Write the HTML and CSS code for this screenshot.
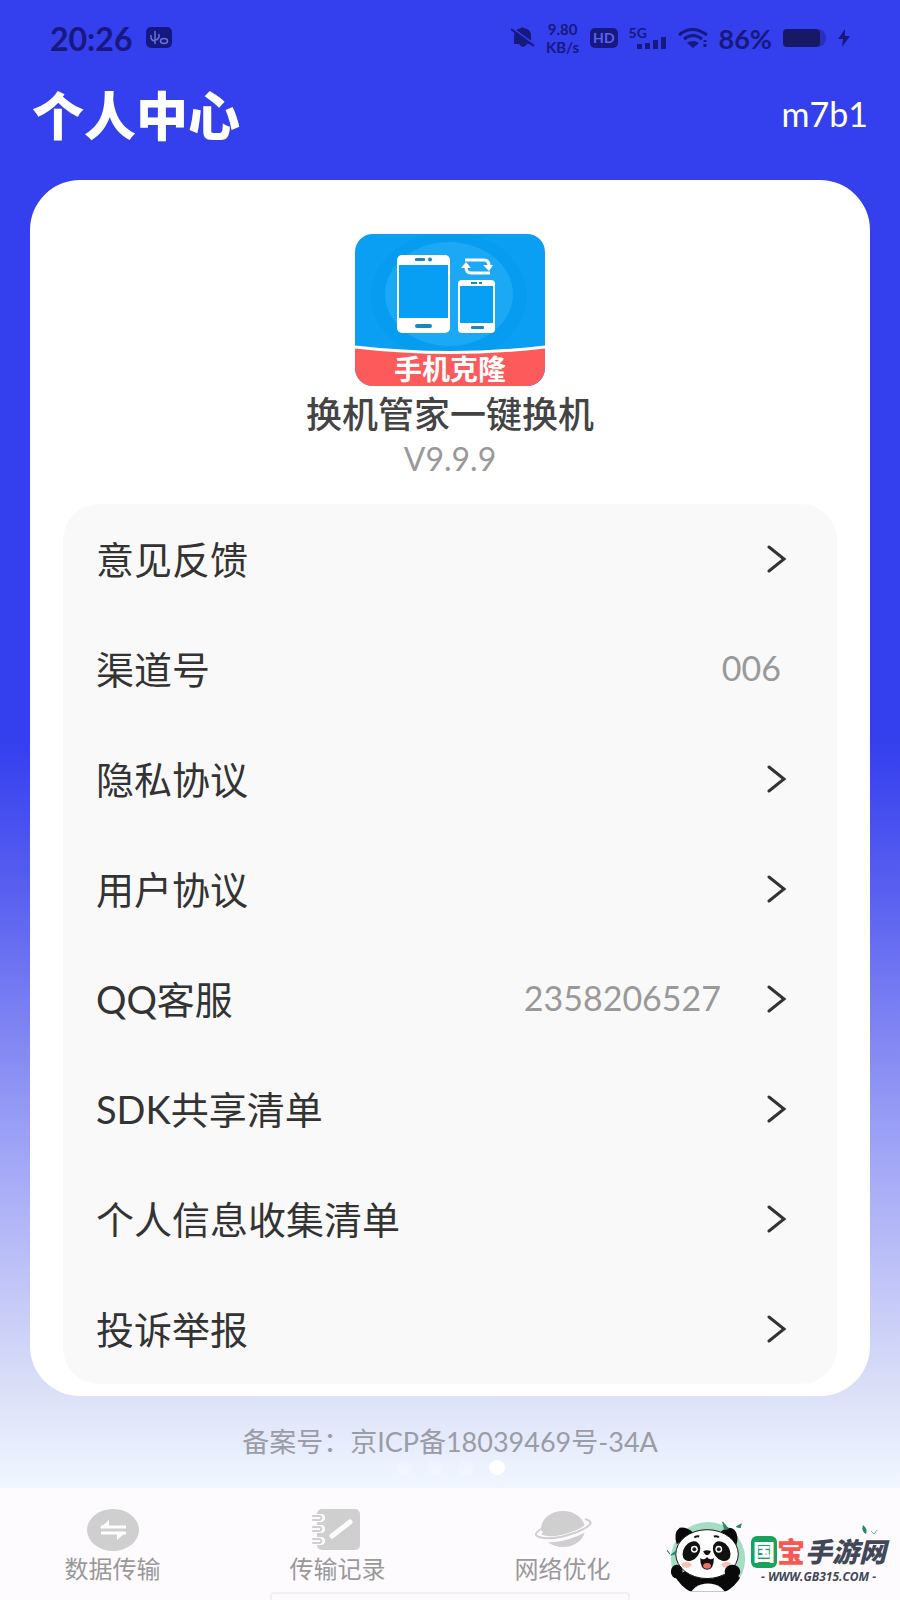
FILE: index.html
```html
<!DOCTYPE html>
<html lang="zh-CN">
<head>
    <meta charset="UTF-8">
    <meta name="viewport" content="width=device-width, initial-scale=1.0">
    <title>个人中心</title>
    <link rel="stylesheet" href="styles.css">
</head>
<body>
    <div class="status-bar">
        <span class="clock">20:26</span>
        <svg class="app-badge" width="26" height="22" viewBox="0 0 26 22">
            <rect width="26" height="21" rx="5" fill="#15187f"/>
            <path d="M5 8v3q1 3 4 3M9 4v13M13 7v3q-1 3-4 3" fill="none" stroke="#6a70d8" stroke-width="1.5"/>
            <ellipse cx="18" cy="14" rx="3.5" ry="2.5" fill="none" stroke="#6a70d8" stroke-width="1.5"/>
        </svg>
        <div class="status-icons">
            <svg width="24" height="22" viewBox="0 0 24 22">
                <path d="M3 17V9q0-7 7-8 1-1.500 3 0 7 1 7 8v8zM8 17h8q-4 6-8 0z" fill="#17197f"/>
                <path d="M1 1l23 17" stroke="#343fee" stroke-width="2"/>
                <path d="M0 2l23 17" stroke="#17197f" stroke-width="2"/>
            </svg>
            <span class="speed"><span>9.80</span><span>KB/s</span></span>
            <span class="hd">HD</span>
            <div class="signal">
                <span class="net">5G</span>
                <svg width="30" height="12" viewBox="0 0 30 12">
                    <path d="M0 7h5v5H0zM8 6h5v6H8zM16 3h5v9h-5zM24 0h5v12h-5z" fill="#17197f"/>
                </svg>
            </div>
            <svg width="30" height="20" viewBox="0 0 30 20">
                <g fill="none" stroke="#17197f" stroke-width="3">
                    <path d="M1 7q13-11 28 0M6 11q9-7 18 0"/>
                </g>
                <path d="M9 15q6-4 12 0l-6 5z" fill="#17197f"/>
                <path d="M27 12v2M27 16v3" stroke="#17197f" stroke-width="3"/>
            </svg>
            <span class="percent">86%</span>
            <svg width="44" height="18" viewBox="0 0 44 18">
                <path d="M36 0q7 2 7 9t-7 9z" fill="#2b30b8"/>
                <rect width="37" height="18" rx="4" fill="#171866"/>
            </svg>
            <svg width="12" height="18" viewBox="0 0 12 18">
                <path d="M7 0L0 10h5l-1 8 8-11H7z" fill="#17197f"/>
            </svg>
        </div>
    </div>

    <div class="header">
        <h1>个人中心</h1>
        <span class="user">m7b1</span>
    </div>

    <div class="card">
        <svg class="logo" viewBox="0 0 190 152">
            <defs>
                <clipPath id="logo-clip"><rect width="190" height="152" rx="18"/></clipPath>
            </defs>
            <g clip-path="url(#logo-clip)">
                <rect width="190" height="152" fill="#0a9ff3"/>
                <ellipse cx="94" cy="62" rx="78" ry="64" fill="#069df0"/>
                <ellipse cx="94" cy="60" rx="64" ry="52" fill="#1ba8f4"/>
                <path d="M0 113q95 11 190 0v39H0z" fill="#fd5a5c"/>
                <path d="M0 113q95 11 190 0" fill="none" stroke="#fff" stroke-width="3"/>
            </g>
            <rect x="42" y="21" width="53" height="78" rx="5" fill="#fff"/>
            <rect x="44" y="31" width="49" height="53" fill="#069ff3"/>
            <rect x="60" y="24" width="10" height="3" rx="1" fill="#1587c4"/>
            <circle cx="75" cy="25.500" r="2" fill="#1587c4"/>
            <rect x="60" y="90" width="17" height="4" rx="2" fill="#1587c4"/>
            <rect x="103" y="46" width="37" height="53" rx="4" fill="#fff"/>
            <rect x="105" y="52" width="33" height="37" fill="#069ff3"/>
            <path d="M116 49h6M124 49h3" stroke="#1587c4" stroke-width="2"/>
            <rect x="116" y="92" width="13" height="3" rx="1" fill="#1587c4"/>
            <path d="M110 26h19q5 0 5 6M135 39h-19q-5 0-5-6" fill="none" stroke="#fff" stroke-width="3"/>
            <path d="M128 31h10l-4 6zM106 34h10l-5-6z" fill="#fff"/>
            <text x="95" y="146" class="logo-text">手机克隆</text>
        </svg>
        <h2>换机管家一键换机</h2>
        <p class="version">V9.9.9</p>

        <ul class="menu">
            <li><a href="#feedback">意见反馈 <svg class="arrow" viewBox="0 0 20 28"><path d="M2 2l15 12L2 26"/></svg></a></li>
            <li><div class="row">渠道号 <span class="value">006</span></div></li>
            <li><a href="#privacy">隐私协议 <svg class="arrow" viewBox="0 0 20 28"><path d="M2 2l15 12L2 26"/></svg></a></li>
            <li><a href="#terms">用户协议 <svg class="arrow" viewBox="0 0 20 28"><path d="M2 2l15 12L2 26"/></svg></a></li>
            <li><a href="#qq">QQ客服 <span class="value">2358206527</span><svg class="arrow" viewBox="0 0 20 28"><path d="M2 2l15 12L2 26"/></svg></a></li>
            <li><a href="#sdk">SDK共享清单 <svg class="arrow" viewBox="0 0 20 28"><path d="M2 2l15 12L2 26"/></svg></a></li>
            <li><a href="#collect">个人信息收集清单 <svg class="arrow" viewBox="0 0 20 28"><path d="M2 2l15 12L2 26"/></svg></a></li>
            <li><a href="#report">投诉举报 <svg class="arrow" viewBox="0 0 20 28"><path d="M2 2l15 12L2 26"/></svg></a></li>
        </ul>
    </div>

    <p class="record">备案号：京ICP备18039469号-34A</p>
    <div class="dots"><i></i><i></i><i></i><i class="on"></i></div>

    <nav class="tabs">
        <a href="#transfer">
            <svg width="54" height="44" viewBox="0 0 54 44">
                <ellipse cx="27" cy="22" rx="26" ry="21" fill="#cfcfcf"/>
                <path d="M15 19h25M15 25h25" stroke="#fff" stroke-width="3"/>
                <path d="M14 20l9-8v8zM40 24l-9 8v-8z" fill="#fff"/>
            </svg>
            数据传输
        </a>
        <a href="#history">
            <svg width="54" height="44" viewBox="0 0 54 44">
                <rect x="6" y="1" width="43" height="41" rx="5" fill="#cfcfcf"/>
                <g fill="none" stroke-linecap="round">
                    <path d="M5 10h5M5 21h5M5 33h5" stroke="#fdfbfe" stroke-width="8"/>
                    <path d="M2 8h7q3 2 0 4H2M2 19h7q3 2 0 4H2M2 31h7q3 2 0 4H2" stroke="#cfcfcf" stroke-width="2"/>
                    <path d="M21 28l18-14" stroke="#fff" stroke-width="5"/>
                </g>
            </svg>
            传输记录
        </a>
        <a href="#network">
            <svg width="60" height="44" viewBox="0 0 60 44">
                <ellipse cx="30" cy="21" rx="22" ry="18" fill="#cfcfcf"/>
                <path d="M8 22q-7 6 0 8 14 4 36-5 20-9 8-13" fill="none" stroke="#fdfbfe" stroke-width="6"/>
                <path d="M8 21q-9 6-2 8 14 4 38-5 22-9 8-13" fill="none" stroke="#cfcfcf" stroke-width="2"/>
            </svg>
            网络优化
        </a>
        <a class="brand" href="#site">
            <svg class="panda" viewBox="0 0 86 78">
                <defs>
                    <clipPath id="panda-clip"><path d="M0 0h86v72H0z"/></clipPath>
                    <clipPath id="body-clip"><circle cx="42" cy="39" r="38"/></clipPath>
                </defs>
                <g clip-path="url(#panda-clip)">
                    <circle cx="42" cy="39" r="38" fill="#a4dcc4"/>
                    <g clip-path="url(#body-clip)">
                        <ellipse cx="42" cy="71" rx="38" ry="25" fill="#090909"/>
                        <ellipse cx="42" cy="77" rx="18" ry="13" fill="#fff"/>
                    </g>
                </g>
                <path d="M10 24q-4-12 3-17 7-1 14 5zM55 11q8-7 14-2 5 6 2 16z" fill="#090909"/>
                <ellipse cx="41" cy="34" rx="32" ry="25" fill="#fff" stroke="#111"/>
                <ellipse cx="25" cy="31" rx="8" ry="11" transform="rotate(35 25 31)" fill="#111"/>
                <ellipse cx="56" cy="31" rx="8" ry="11" transform="rotate(-35 56 31)" fill="#111"/>
                <circle cx="28" cy="29" r="3.500" fill="#fff"/>
                <circle cx="53" cy="29" r="3.500" fill="#fff"/>
                <circle cx="28" cy="29" r="2" fill="#222"/>
                <circle cx="53" cy="29" r="2" fill="#222"/>
                <path d="M28 17q2-2 5-1M48 16q4-1 5 1" fill="none" stroke="#111" stroke-width="2"/>
                <path d="M37 31q4-2 8 0-2 4-4 4t-4-4z" fill="#111"/>
                <path d="M34 38q4 3 7-1 3 4 7 1 0 12-7 12t-7-12z" fill="#111"/>
                <ellipse cx="41" cy="46" rx="4" ry="3" fill="#f56c66"/>
                <ellipse cx="20" cy="45" rx="5" ry="3" fill="#f9c0b5"/>
                <ellipse cx="61" cy="45" rx="5" ry="3" fill="#f9c0b5"/>
                <ellipse cx="67" cy="52" rx="8" ry="7" fill="#090909"/>
                <ellipse cx="10" cy="52" rx="6" ry="7" fill="#090909"/>
                <path d="M57 1l6 7-4 1zM71 6l5-3-1 4zM0 30l3 4zM4 35l6-5-2 4z" fill="#278563" stroke="#278563"/>
            </svg>
            <span class="brand-text">
                <svg class="leaves" width="16" height="12" viewBox="0 0 16 12">
                    <path d="M1 1q5 4 3 9-5-3-3-9z" fill="#278563"/>
                    <path d="M9 7l3 3 3-4" fill="none" stroke="#7fae9c"/>
                </svg>
                <span class="brand-name"><b class="green">国</b><b class="red">宝</b><em>手游网</em></span>
                <span class="brand-url">- WWW.GB315.COM -</span>
            </span>
        </a>
    </nav>
    <div class="home-bar"></div>
</body>
</html>
```
FILE: styles.css
```css
* {
    box-sizing: border-box;
}
body {
    margin: 0;
    min-height: 100vh;
    display: flex;
    flex-direction: column;
    position: relative;
    overflow-x: hidden;
    font-family: Lato, "Noto Sans CJK SC", sans-serif;
    color: #333;
    background: linear-gradient(#343fee 0, #343fee 740px, #5b62f0 900px, #a0a4f6 1150px, #dce1f8 1395px, #f0f6ff 1485px);
}
h1, h2, p, ul {
    margin: 0;
    padding: 0;
}
a {
    color: inherit;
    text-decoration: none;
}
.status-bar {
    height: 76px;
    padding: 0 50px;
    display: flex;
    align-items: center;
    color: #17197f;
}
.clock {
    font-size: 32px;
    font-weight: bold;
}
.app-badge {
    margin-left: 14px;
}
.status-icons {
    margin-left: auto;
    display: flex;
    align-items: center;
    gap: 11px;
}
.speed {
    display: flex;
    flex-direction: column;
    align-items: center;
    font-size: 15px;
    line-height: 18px;
    font-weight: bold;
}
.hd {
    padding: 0 3px;
    border-radius: 5px;
    background: #17197f;
    color: #5c64ee;
    font-size: 14px;
    line-height: 20px;
    font-weight: bold;
}
.signal {
    display: flex;
    flex-direction: column;
    align-items: flex-end;
}
.net {
    width: 38px;
    font-size: 14px;
    line-height: 12px;
    font-weight: bold;
}
.signal svg {
    margin-top: -2px;
}
.percent {
    font-size: 27px;
    font-weight: bold;
}
.header {
    height: 104px;
    padding: 0 32px;
    display: flex;
    align-items: flex-start;
    justify-content: space-between;
    color: #fff;
}
h1 {
    font-size: 52px;
    line-height: 80px;
    font-weight: 900;
}
.user {
    font-size: 34px;
    line-height: 76px;
}
.card {
    margin: 0 30px;
    padding: 54px 33px 12px;
    border-radius: 50px;
    background: #fff;
    text-align: center;
}
.logo {
    display: block;
    width: 190px;
    height: 152px;
    margin: 0 auto;
}
.logo-text {
    font-size: 28px;
    font-weight: bold;
    fill: #fff;
    text-anchor: middle;
}
h2 {
    margin-top: 4px;
    font-size: 36px;
    line-height: 48px;
    font-weight: 500;
    color: #444;
}
.version {
    font-size: 32px;
    line-height: 42px;
    color: #999;
}
.menu {
    margin-top: 24px;
    border-radius: 36px;
    background: #f9f9f9;
    list-style: none;
    text-align: left;
}
.menu a, .row {
    height: 110px;
    padding: 0 50px 4px 33px;
    display: flex;
    align-items: center;
    font-size: 38px;
}
.menu .row {
    padding-right: 56px;
}
.value {
    margin-left: auto;
    font-size: 34px;
    color: #999;
}
.arrow {
    width: 20px;
    height: 28px;
    margin: 4px 0 0 auto;
    fill: none;
    stroke: #333;
    stroke-width: 3;
    stroke-linecap: round;
}
.value + .arrow {
    margin-left: 46px;
}
.record {
    margin-top: 30px;
    font-size: 27px;
    line-height: 32px;
    text-align: center;
    color: #9b9ca6;
}
.dots {
    height: 30px;
    display: flex;
    justify-content: center;
    gap: 15px;
    padding-top: 2px;
}
.dots i {
    width: 16px;
    height: 15px;
    border-radius: 50%;
    background: rgba(255, 255, 255, 0.2);
}
.dots .on {
    background: #fff;
}
.tabs {
    flex: 1;
    display: grid;
    grid-template-columns: repeat(4, 1fr);
    background: #fdfbfe;
}
.tabs a {
    padding-top: 20px;
    display: flex;
    flex-direction: column;
    align-items: center;
    font-size: 24px;
    line-height: 34px;
    color: #999;
}
.tabs .brand {
    padding: 32px 0 0;
    margin-left: -8px;
    flex-direction: row;
    align-items: flex-start;
}
.panda {
    width: 84px;
    height: 78px;
    flex: none;
}
.brand-text {
    display: flex;
    flex-direction: column;
    align-items: center;
}
.leaves {
    align-self: flex-end;
    margin: 4px 8px 0 0;
}
.brand-name {
    display: flex;
    align-items: center;
    line-height: 32px;
    white-space: nowrap;
    font-weight: 900;
}
.green {
    padding: 0 2px;
    border-radius: 6px;
    background: #17a35c;
    color: #fff;
    font-size: 22px;
}
.red {
    font-size: 28px;
    color: #f8584f;
}
.brand-name em {
    font-size: 27px;
    color: #414857;
}
.brand-url {
    font: italic bold 12px "Open Sans", sans-serif;
    line-height: 18px;
    color: #414857;
    white-space: nowrap;
}
.home-bar {
    position: absolute;
    left: 30%;
    right: 30%;
    bottom: 0;
    height: 8px;
    border: 2px solid #f0eff1;
    border-bottom: 0;
    border-radius: 4px 4px 0 0;
}
```
